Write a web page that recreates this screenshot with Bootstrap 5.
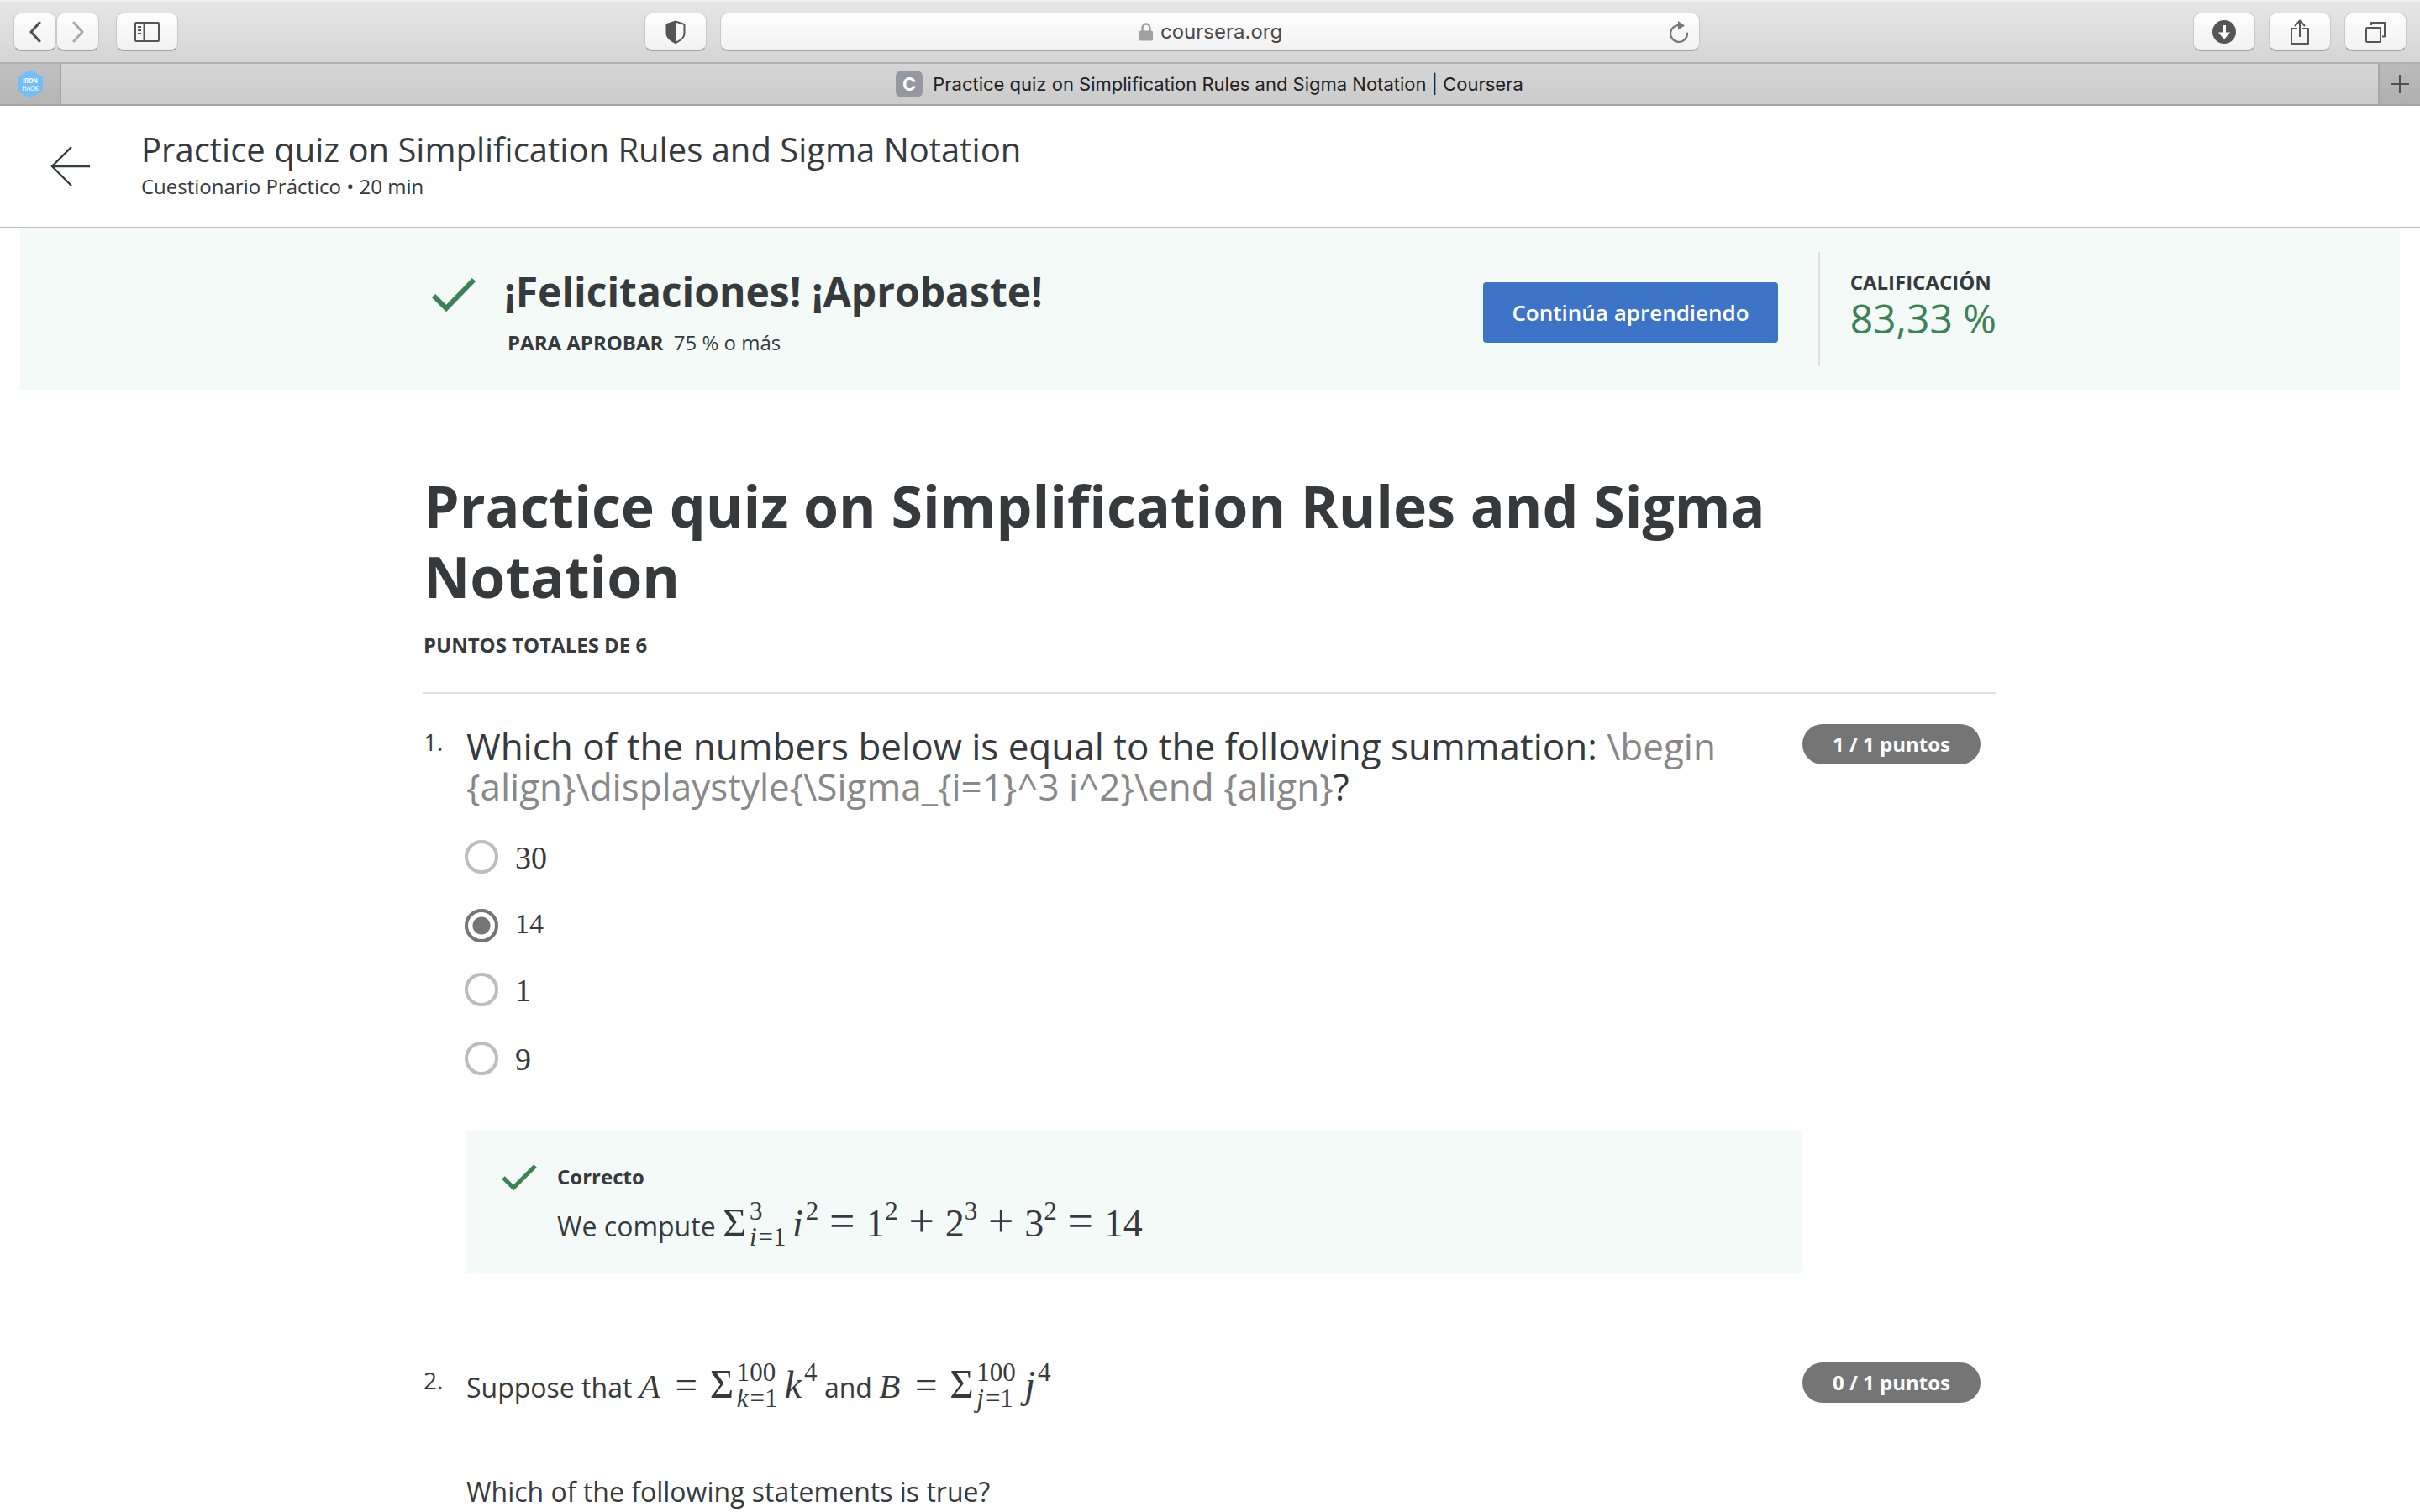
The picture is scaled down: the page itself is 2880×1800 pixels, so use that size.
<!DOCTYPE html>
<html lang="es">
<head>
<meta charset="utf-8">
<meta name="viewport" content="width=device-width, initial-scale=1">
<title>Practice quiz on Simplification Rules and Sigma Notation | Coursera</title>
<link href="https://cdn.jsdelivr.net/npm/bootstrap@5.3.0/dist/css/bootstrap.min.css" rel="stylesheet">
<style>
  :root { --ink: #373a3c; --ok: #3d8257; --mint: #f3faf8; --line: #e0e0e0; }
  body { font-family: "Open Sans", sans-serif; color: var(--ink); font-size: 32px; line-height: 48px; background: #fff; }
  svg { display: block; flex: none; }

  /* browser toolbar */
  .chrome { font-family: Inter, "Liberation Sans", sans-serif; }
  .toolbar { height: 76px; padding: 0 16px; background: linear-gradient(#e6e6e6, #d5d5d5); border-top: 2px solid #f0f0f0; border-bottom: 2px solid #b0b0b0; }
  .tool, .urlbar { height: 46px; border: 1px solid #c8c8c8; border-bottom: 2px solid #a5a5a5; border-radius: 9px; background: linear-gradient(#fdfdfd, #f2f2f2); color: #555; }
  .tool { width: 74px; padding: 0; display: flex; align-items: center; justify-content: center; }
  .tool-half { width: 51px; }
  .tool-side { margin-left: 20px; }
  .urlbar { width: 1166px; padding: 0 12px; }
  .urlbar input { width: 144px; padding: 0; border: 0; background: none; font-size: 24px; line-height: 32px; color: #4a4a4a; outline: 0; }
  .side { flex: 1 1 0; }
  .side-end { flex-basis: 90px; }
  .tabs { height: 50px; background: linear-gradient(#d6d6d6, #cbcbcb); border-bottom: 2px solid #a6a6a6; }
  .tab-pinned { width: 73px; border-right: 2px solid #a6a6a6; background: linear-gradient(#c1c1c1, #b5b5b5); }
  .tab-new { width: 50px; padding: 0; border: 0; border-left: 2px solid #a6a6a6; background: linear-gradient(#bbb, #afafaf); color: #4f4f4f; }
  .tab-open { font-size: 22px; line-height: 32px; color: #222; padding-right: 24px; }
  .favicon { width: 32px; height: 32px; border-radius: 7px; background: #9597a1; color: #fff; font-weight: 700; text-align: center; }

  /* quiz header */
  .quiz-head { height: 146px; border-bottom: 2px solid #bdbdbd; padding-left: 60px; gap: 60px; }
  .quiz-head h2 { font-size: 40px; line-height: 48px; font-weight: 400; }
  .txt-s { font-size: 24px; line-height: 40px; }
  .quiz-wrap { max-width: 1872px; margin: 0 auto; }

  /* result banner */
  .result { margin: 0 24px; background: var(--mint); height: 192px; }
  .result-text { padding-top: 46px; }
  .result-text h1 { font-size: 48px; line-height: 58px; font-weight: 700; }
  .btn-go { height: 72px; padding: 0 34px; margin-top: 36px; border-radius: 4px; background: #3d74c7; color: #fff; font-size: 26px; font-weight: 600; line-height: 72px; border: 0; }
  .grade { border-left: 2px solid #dde0df; padding-left: 36px; padding-top: 20px; }
  .grade-label { font-size: 24px; line-height: 32px; font-weight: 700; }
  .grade-num { font-size: 48px; line-height: 54px; color: var(--ok); }

  /* formulas */
  .fm { font-family: "Liberation Serif", serif; font-size: 46px; line-height: 48px; white-space: nowrap; }
  .fm i { margin-right: 3px; }
  .fm-s { font-size: 41px; }
  .sg { display: inline-block; width: 32px; font-size: 49px; line-height: 48px; }
  .op { display: inline-block; width: 56px; text-align: center; font-size: 54px; line-height: 48px; }
  .op-s { font-size: 47px; }
  .scr { display: inline-flex; flex-direction: column; gap: 8px; font-size: 31px; line-height: 23px; vertical-align: 20px; }
  .scr i { margin-right: 2px; }
  .scr-sum { min-width: 51px; }
  .scr-wide { min-width: 57px; }

  /* quiz body */
  .quiz-title { font-size: 68px; line-height: 84px; font-weight: 700; padding-top: 96px; }
  .quiz-rule { border-bottom: 2px solid var(--line); padding-bottom: 36px; margin-bottom: 36px; }
  .q-num { width: 51px; font-size: 28px; line-height: 42px; flex: none; }
  .q-body { min-width: 0; }
  .q-points { width: 231px; flex: none; }
  .pill { height: 48px; width: 212px; border-radius: 24px; background: #757575; color: #fff; font-size: 24px; font-weight: 700; line-height: 47px; text-align: center; }
  .q-text { font-size: 44px; line-height: 48px; padding-top: 2px; }
  .raw-tex { color: #888; }
  .options { margin-top: 40px; gap: 36px; }
  .opt { gap: 20px; padding: 0; margin: 0; min-height: 40px; }
  .opt .form-check-input { width: 40px; height: 40px; margin: 0 0 0 -2px; border: 4px solid #bdbdbd; float: none; flex: none; }
  .opt .form-check-input:checked { border-color: #757575; background: #fff radial-gradient(circle, #757575 10px, transparent 11px); }
  .opt-l { font-size: 38px; line-height: 42px; padding-bottom: 4px; }
  .opt-m { font-size: 34px; line-height: 36px; }
  .feedback { margin-top: 60px; background: var(--mint); padding: 36px 42px 32px; gap: 24px; }
  .feedback h3 { font-size: 24px; line-height: 38px; font-weight: 700; margin-bottom: 10px; }
  .q-next { margin-top: 106px; }
  .q-ask { margin-top: 76px; }
</style>
</head>
<body>
<div class="chrome">
  <div class="toolbar d-flex align-items-center">
    <div class="side d-flex align-items-center">
      <button class="tool tool-half" aria-label="Atrás"><svg width="16" height="26" viewBox="0 0 16 26" fill="none" stroke="#4f4f4f" stroke-width="3" stroke-linecap="round" stroke-linejoin="round"><path d="M13 2 3 13l10 11"/></svg></button>
      <button class="tool tool-half" aria-label="Adelante"><svg width="16" height="26" viewBox="0 0 16 26" fill="none" stroke="#a9a9a9" stroke-width="3" stroke-linecap="round" stroke-linejoin="round"><path d="m3 2 10 11L3 24"/></svg></button>
      <button class="tool tool-side" aria-label="Barra lateral"><svg width="30" height="24" viewBox="0 0 30 24" fill="none" stroke="#555" stroke-width="2"><rect x="1" y="1" width="28" height="22" rx="1"/><path d="M11.500 1v22M4 6h4M4 10h4M4 14h4"/></svg></button>
    </div>
    <button class="tool me-3" aria-label="Informe de privacidad"><svg width="24" height="28" viewBox="0 0 24 28"><path d="M12 1.500 22.500 5v11c0 5-5 8.500-10.500 11C6.500 24.500 1.500 21 1.500 16V5z" fill="none" stroke="#555" stroke-width="2"/><path d="M12 1v26C6.500 24.500 1.500 21 1.500 16V5z" fill="#555"/></svg></button>
    <div class="urlbar d-flex align-items-center">
      <div class="side"></div>
      <svg class="me-2" width="18" height="22" viewBox="0 0 18 22"><path d="M4.500 10V6.500a4.500 5 0 0 1 9 0V10" fill="none" stroke="#a0a0a0" stroke-width="2.400"/><rect x="1" y="9.500" width="16" height="12" rx="1.500" fill="#a0a0a0"/></svg>
      <input type="text" value="coursera.org" aria-label="Dirección">
      <div class="side d-flex justify-content-end"><svg width="24" height="28" viewBox="0 0 24 28"><path d="M14.500 6.300A10 10 0 1 0 22 15.500" fill="none" stroke="#777" stroke-width="2.200" stroke-linecap="round"/><path d="M11 1v10.500l8-5z" fill="#777"/></svg></div>
    </div>
    <div class="side side-end d-flex justify-content-end gap-3">
      <button class="tool" aria-label="Descargas"><svg width="28" height="28" viewBox="0 0 28 28"><circle cx="14" cy="14" r="14" fill="#555"/><path d="M12 6h4v8.500h5L14 23l-7-8.500h5z" fill="#fff"/></svg></button>
      <button class="tool" aria-label="Compartir"><svg width="24" height="32" viewBox="0 0 24 32" fill="none" stroke="#555" stroke-width="2" stroke-linejoin="round"><path d="M9 12H2v18h20V12h-7M12 22V3M6 9l6-6.500L18 9"/></svg></button>
      <button class="tool" aria-label="Pestañas"><svg width="26" height="26" viewBox="0 0 26 26" fill="none" stroke="#555" stroke-width="2" stroke-linejoin="round"><rect x="2" y="8" width="17" height="17" rx="1.500"/><path d="M8 5V2h16v16.500h-3"/></svg></button>
    </div>
  </div>
  <div class="tabs d-flex align-items-stretch">
    <div class="tab-pinned d-flex align-items-center justify-content-center">
      <svg width="32" height="34" viewBox="0 0 32 34"><path d="M16 1 30 9v16l-14 8L2 25V9z" fill="#73bff5" stroke="#73bff5" stroke-width="2" stroke-linejoin="round"/><text x="16" y="16" font-size="7" font-weight="700" fill="#fff" text-anchor="middle">IRON</text><text x="16" y="25" font-size="7" fill="#fff" text-anchor="middle">HACK</text></svg>
    </div>
    <div class="tab-open flex-grow-1 d-flex align-items-center justify-content-center"><span class="favicon me-2">C</span><span class="ms-1">Practice quiz on Simplification Rules and Sigma Notation | Coursera</span></div>
    <button class="tab-new d-flex align-items-center justify-content-center" aria-label="Nueva pestaña"><svg width="22" height="22" viewBox="0 0 22 22" stroke="#4f4f4f" stroke-width="2"><path d="M11 0v22M0 11h22"/></svg></button>
  </div>
</div>

<header class="quiz-head d-flex align-items-center">
  <a href="#" aria-label="Volver"><svg width="48" height="48" viewBox="0 0 48 48" fill="none" stroke="#373a3c" stroke-width="2.400"><path d="M47 24H2M25 1 2 24l23 23"/></svg></a>
  <div>
    <h2 class="m-0">Practice quiz on Simplification Rules and Sigma Notation</h2>
    <div class="txt-s">Cuestionario Práctico • 20 min</div>
  </div>
</header>

<section class="result">
  <div class="quiz-wrap d-flex h-100">
    <svg class="mt-5 ms-2" width="56" height="64" viewBox="0 0 56 64" fill="none" stroke="#3d8257" stroke-width="6"><path d="M4 32 19 47 52 13"/></svg>
    <div class="result-text flex-grow-1 ms-4 ps-2">
      <h1 class="m-0">¡Felicitaciones! ¡Aprobaste!</h1>
      <div class="txt-s mt-2 pt-1 ps-1"><strong>PARA APROBAR</strong>&nbsp; 75 % o más</div>
    </div>
    <div class="d-flex my-4 py-1 gap-5">
      <button class="btn-go">Continúa aprendiendo</button>
      <div class="grade">
        <div class="grade-label">CALIFICACIÓN</div>
        <div class="grade-num">83,33 %</div>
      </div>
    </div>
  </div>
</section>

<main class="quiz-wrap">
  <h1 class="quiz-title m-0">Practice quiz on Simplification Rules and Sigma Notation</h1>
  <div class="quiz-rule pt-3 mt-1"><div class="txt-s fw-bold">PUNTOS TOTALES DE 6</div></div>

  <section class="d-flex">
    <div class="q-num">1.</div>
    <div class="q-body flex-grow-1">
      <div class="q-text">Which of the numbers below is equal to the following summation: <span class="raw-tex">\begin {align}\displaystyle{\Sigma_{i=1}^3 i^2}\end {align}</span>?</div>
      <div class="options d-flex flex-column">
        <div class="opt form-check d-flex align-items-start"><input class="form-check-input" type="radio" name="q1" id="o30"><label class="fm opt-l" for="o30">30</label></div>
        <div class="opt form-check d-flex align-items-start"><input class="form-check-input" type="radio" name="q1" id="o14" checked><label class="fm opt-m" for="o14">14</label></div>
        <div class="opt form-check d-flex align-items-start"><input class="form-check-input" type="radio" name="q1" id="o1"><label class="fm opt-l" for="o1">1</label></div>
        <div class="opt form-check d-flex align-items-start"><input class="form-check-input" type="radio" name="q1" id="o9"><label class="fm opt-l" for="o9">9</label></div>
      </div>
      <div class="feedback d-flex">
        <svg width="42" height="40" viewBox="0 0 42 40" fill="none" stroke="#3d8257" stroke-width="5"><path d="M2 20 14 32 40 6"/></svg>
        <div>
          <h3>Correcto</h3>
          <div>We compute <span class="fm"><span class="sg">Σ</span><span class="scr scr-sum"><span>3</span><span><i>i</i>=1</span></span><i>i</i><span class="scr">2</span><span class="op">=</span>1<span class="scr">2</span><span class="op">+</span>2<span class="scr">3</span><span class="op">+</span>3<span class="scr">2</span><span class="op">=</span>14</span></div>
        </div>
      </div>
    </div>
    <div class="q-points"><div class="pill">1 / 1 puntos</div></div>
  </section>

  <section class="d-flex q-next">
    <div class="q-num">2.</div>
    <div class="q-body flex-grow-1">
      <div>Suppose that <span class="fm"><span class="fm-s"><i>A</i></span><span class="op op-s">=</span><span class="sg">Σ</span><span class="scr scr-wide"><span>100</span><span><i>k</i>=1</span></span><i>k</i><span class="scr">4</span></span> and <span class="fm"><span class="fm-s"><i>B</i></span><span class="op op-s">=</span><span class="sg">Σ</span><span class="scr scr-wide"><span>100</span><span><i>j</i>=1</span></span><i>j</i><span class="scr">4</span></span></div>
      <div class="q-ask">Which of the following statements is true?</div>
    </div>
    <div class="q-points"><div class="pill">0 / 1 puntos</div></div>
  </section>
</main>
<script src="https://cdn.jsdelivr.net/npm/bootstrap@5.3.0/dist/js/bootstrap.bundle.min.js"></script>
</body>
</html>
